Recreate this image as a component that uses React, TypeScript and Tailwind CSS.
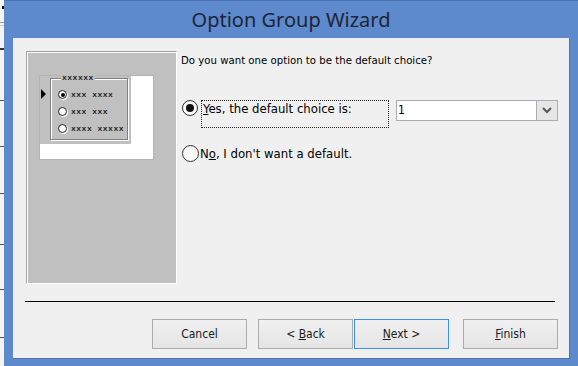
import React from 'react';

const ui = { fontFamily: '"DejaVu Sans Condensed", "DejaVu Sans", sans-serif' };

const MiniRadio: React.FC<{ on?: boolean; label: string }> = ({ on, label }) => (
  <div className="flex items-center h-[17px]">
    <div className="w-[9px] h-[9px] rounded-full border border-[#202020] bg-white flex items-center justify-center shadow-[1px_1px_0_#ffffff]">
      {on && <div className="w-[4px] h-[4px] rounded-full bg-black" />}
    </div>
    <span
      className="ml-[4px] text-[8px] font-bold leading-none tracking-[0.5px] text-[#202020]"
      style={{ fontFamily: '"Liberation Mono", monospace' }}
    >
      {label}
    </span>
  </div>
);

const Button: React.FC<{ children: React.ReactNode; focus?: boolean }> = ({ children, focus }) => (
  <button
    className={
      'w-[95px] h-[30px] text-[12px] text-[#1a1a1a] bg-gradient-to-b from-[#f0f0f0] to-[#e5e5e5] border ' +
      (focus ? 'border-[#3c8ee6]' : 'border-[#acacac]')
    }
    style={ui}
  >
    {children}
  </button>
);

export default function App() {
  return (
    <div className="w-[578px] h-[366px] flex overflow-hidden bg-white">
      {/* strip of the window behind */}
      <div className="w-[4px] h-full flex flex-col bg-[#f4f4f4]">
        <div className="h-[6px]" />
        <div className="h-[3px] w-[2px] ml-[2px] bg-black" />
        <div className="h-[13px]" />
        <div className="h-[1px] bg-[#9a9a9a]" />
        <div className="h-[2px]" />
        <div className="h-[1px] bg-[#c8c8c8]" />
        <div className="h-[22px]" />
        <div className="h-[2px] bg-[#333]" />
        <div className="h-[50px]" />
        <div className="h-[1px] bg-[#555]" />
        <div className="h-[45px]" />
        <div className="h-[1px] bg-[#555]" />
        <div className="h-[46px]" />
        <div className="h-[1px] bg-[#555]" />
        <div className="h-[50px]" />
        <div className="h-[1px] bg-[#555]" />
        <div className="h-[44px]" />
        <div className="h-[1px] bg-[#555]" />
        <div className="h-[47px]" />
        <div className="h-[1px] bg-[#555]" />
      </div>

      {/* dialog frame */}
      <div className="flex-1 flex flex-col bg-[#5d89cd] border-t border-[#4a72b0]">
        <div
          className="h-[37px] flex items-center justify-center text-[20px] text-[#1d2535]"
          style={{ fontFamily: '"Noto Sans", "Open Sans", sans-serif' }}
        >
          Option Group Wizard
        </div>

        <div className="ml-[9px] mr-[8px] mb-[7px] flex-1 bg-[#f0f0f0] flex flex-col border-r border-b border-[#4c74b3]" style={ui}>
          <div className="flex pt-[13px]">
            {/* preview */}
            <div className="ml-[13px] w-[151px] h-[233px] border-t border-l border-[#a0a0a0] border-r border-b border-r-white border-b-white">
              <div className="w-full h-full bg-[#c0c0c0] border-t border-l border-white pt-[22px] pl-[11px]">
                <div className="w-[115px] h-[85px] bg-white border border-[#b4b4b4]">
                  <div className="w-[91px] h-[68px] bg-[#c0c0c0] flex">
                    <div className="w-[10px] pt-[13px] pl-[1px]">
                      <svg width="6" height="10" viewBox="0 0 6 10">
                        <path d="M0 0 L5 5 L0 10 Z" fill="#000" />
                      </svg>
                    </div>
                    <div className="relative mt-[2px] w-[78px] h-[62px] border border-[#808080] shadow-[inset_1px_1px_0_#ffffff,1px_1px_0_#ffffff]">
                      <span
                        className="absolute left-[10px] top-[-5px] px-[1px] bg-[#c0c0c0] text-[8px] font-bold leading-none tracking-[0.5px] text-[#202020]"
                        style={{ fontFamily: '"Liberation Mono", monospace' }}
                      >
                        xxxxxx
                      </span>
                      <div className="pt-[7px] pl-[7px] flex flex-col">
                        <MiniRadio on label="xxx xxxx" />
                        <MiniRadio label="xxx xxx" />
                        <MiniRadio label="xxxx xxxxx" />
                      </div>
                    </div>
                  </div>
                </div>
              </div>
            </div>

            {/* options */}
            <div className="ml-[4px] flex-1 flex flex-col text-black">
              <div className="mt-[2px] h-[15px] leading-[15px] text-[11.3px]">Do you want one option to be the default choice?</div>
              <div className="mt-[32px] flex items-start text-[13px]">
                <div className="ml-[1px] w-[16px] h-[16px] rounded-full border border-[#333] bg-gradient-to-b from-[#f4f4f4] to-white flex items-center justify-center">
                  <div className="w-[8px] h-[8px] rounded-full bg-[#111]" />
                </div>
                <div className="ml-[3px] w-[188px] h-[28px] border border-dotted border-[#222] pl-[1px] leading-[15px]">
                  <span className="underline">Y</span>es, the default choice is:
                </div>
                <div className="ml-[7px] w-[162px] h-[21px] flex bg-white border border-[#abadb3] text-[12px]">
                  <div className="flex-1 pl-[1px] leading-[19px]">1</div>
                  <div className="w-[21px] h-full bg-[#e6e6e6] border-l border-[#abadb3] flex items-center justify-center">
                    <svg width="10" height="7" viewBox="0 0 10 7">
                      <path d="M1 1 L5 5 L9 1" stroke="#555" strokeWidth="2" fill="none" />
                    </svg>
                  </div>
                </div>
              </div>
              <div className="mt-[17px] flex items-center text-[13px]">
                <div className="ml-[1px] w-[17px] h-[17px] rounded-full border border-[#333] bg-gradient-to-b from-[#f4f4f4] to-white" />
                <div className="ml-[1px] leading-[15px]">
                  N<span className="underline">o</span>, I don't want a default.
                </div>
              </div>
            </div>
          </div>

          <div className="mt-[17px] ml-[12px] w-[530px] h-[1px] bg-black" />

          <div className="mt-[17px] flex">
            <div className="ml-[139px]">
              <Button>Cancel</Button>
            </div>
            <div className="ml-[11px]">
              <Button>
                &lt; <span className="underline">B</span>ack
              </Button>
            </div>
            <div className="ml-[1px]">
              <Button focus>
                <span className="underline">N</span>ext &gt;
              </Button>
            </div>
            <div className="ml-[14px]">
              <Button>
                <span className="underline">F</span>inish
              </Button>
            </div>
          </div>
        </div>
      </div>
    </div>
  );
}
